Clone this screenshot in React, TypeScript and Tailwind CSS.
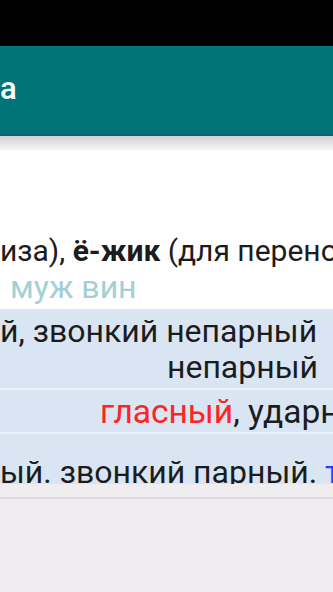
import React from "react"

const font = { fontFamily: "Roboto, 'Noto Sans', sans-serif" }

export default function App() {
  return (
    <div
      className="w-[333px] h-[592px] overflow-hidden bg-[#efedf0] flex flex-col"
      style={font}
    >
      {/* status bar */}
      <div className="h-[46px] bg-black shrink-0" />

      {/* app bar */}
      <div className="h-[90px] shrink-0 bg-[#007577] border-b-2 border-[#0b6667] flex items-center">
        <span className="text-white text-[31px] font-medium leading-none -mt-[3px]">а</span>
      </div>

      {/* shadow under the toolbar */}
      <div className="h-[14px] shrink-0 bg-gradient-to-b from-[#d2d0d4] to-[#f5f4f6]" />

      {/* card */}
      <div className="h-[334px] shrink-0 bg-white flex flex-col overflow-hidden text-[#1c1c1c] text-[32px]">
        <div className="h-[83px] shrink-0" />

        <div className="h-[36px] shrink-0 overflow-hidden whitespace-nowrap text-[30px] leading-[36px]">
          иза), <b className="font-bold">ё-жик</b> (для переноса
        </div>
        <div className="h-[40px] shrink-0 whitespace-nowrap pl-[10px] leading-[36px] text-[#a3cfd7]">
          муж вин
        </div>

        <div className="flex flex-col bg-[#dae5f4]">
          <div className="h-[79px] flex flex-col pt-[4px]">
            <div className="whitespace-nowrap leading-[36px]">й, звонкий непарный</div>
            <div className="text-right pr-[15px] leading-[37px]">непарный</div>
          </div>
          <div className="h-[2px] bg-[#edf1f8]" />
          <div className="h-[42px] overflow-hidden whitespace-nowrap pl-[100px] pt-[4px] text-[33.5px] leading-[36px]">
            <span className="text-[#ff2323]">гласный</span>, ударный
          </div>
          <div className="h-[2px] bg-[#edf1f8]" />
          <div className="h-[50px] overflow-hidden whitespace-nowrap pt-[20px] leading-[36px]">
            ый. звонкий парный. <span className="text-[#2140ff]">твёрдый</span>
          </div>
        </div>
      </div>

      <div className="h-[13px] shrink-0" />
      <div className="h-[2px] shrink-0 bg-[#dcdadd]" />
    </div>
  )
}
